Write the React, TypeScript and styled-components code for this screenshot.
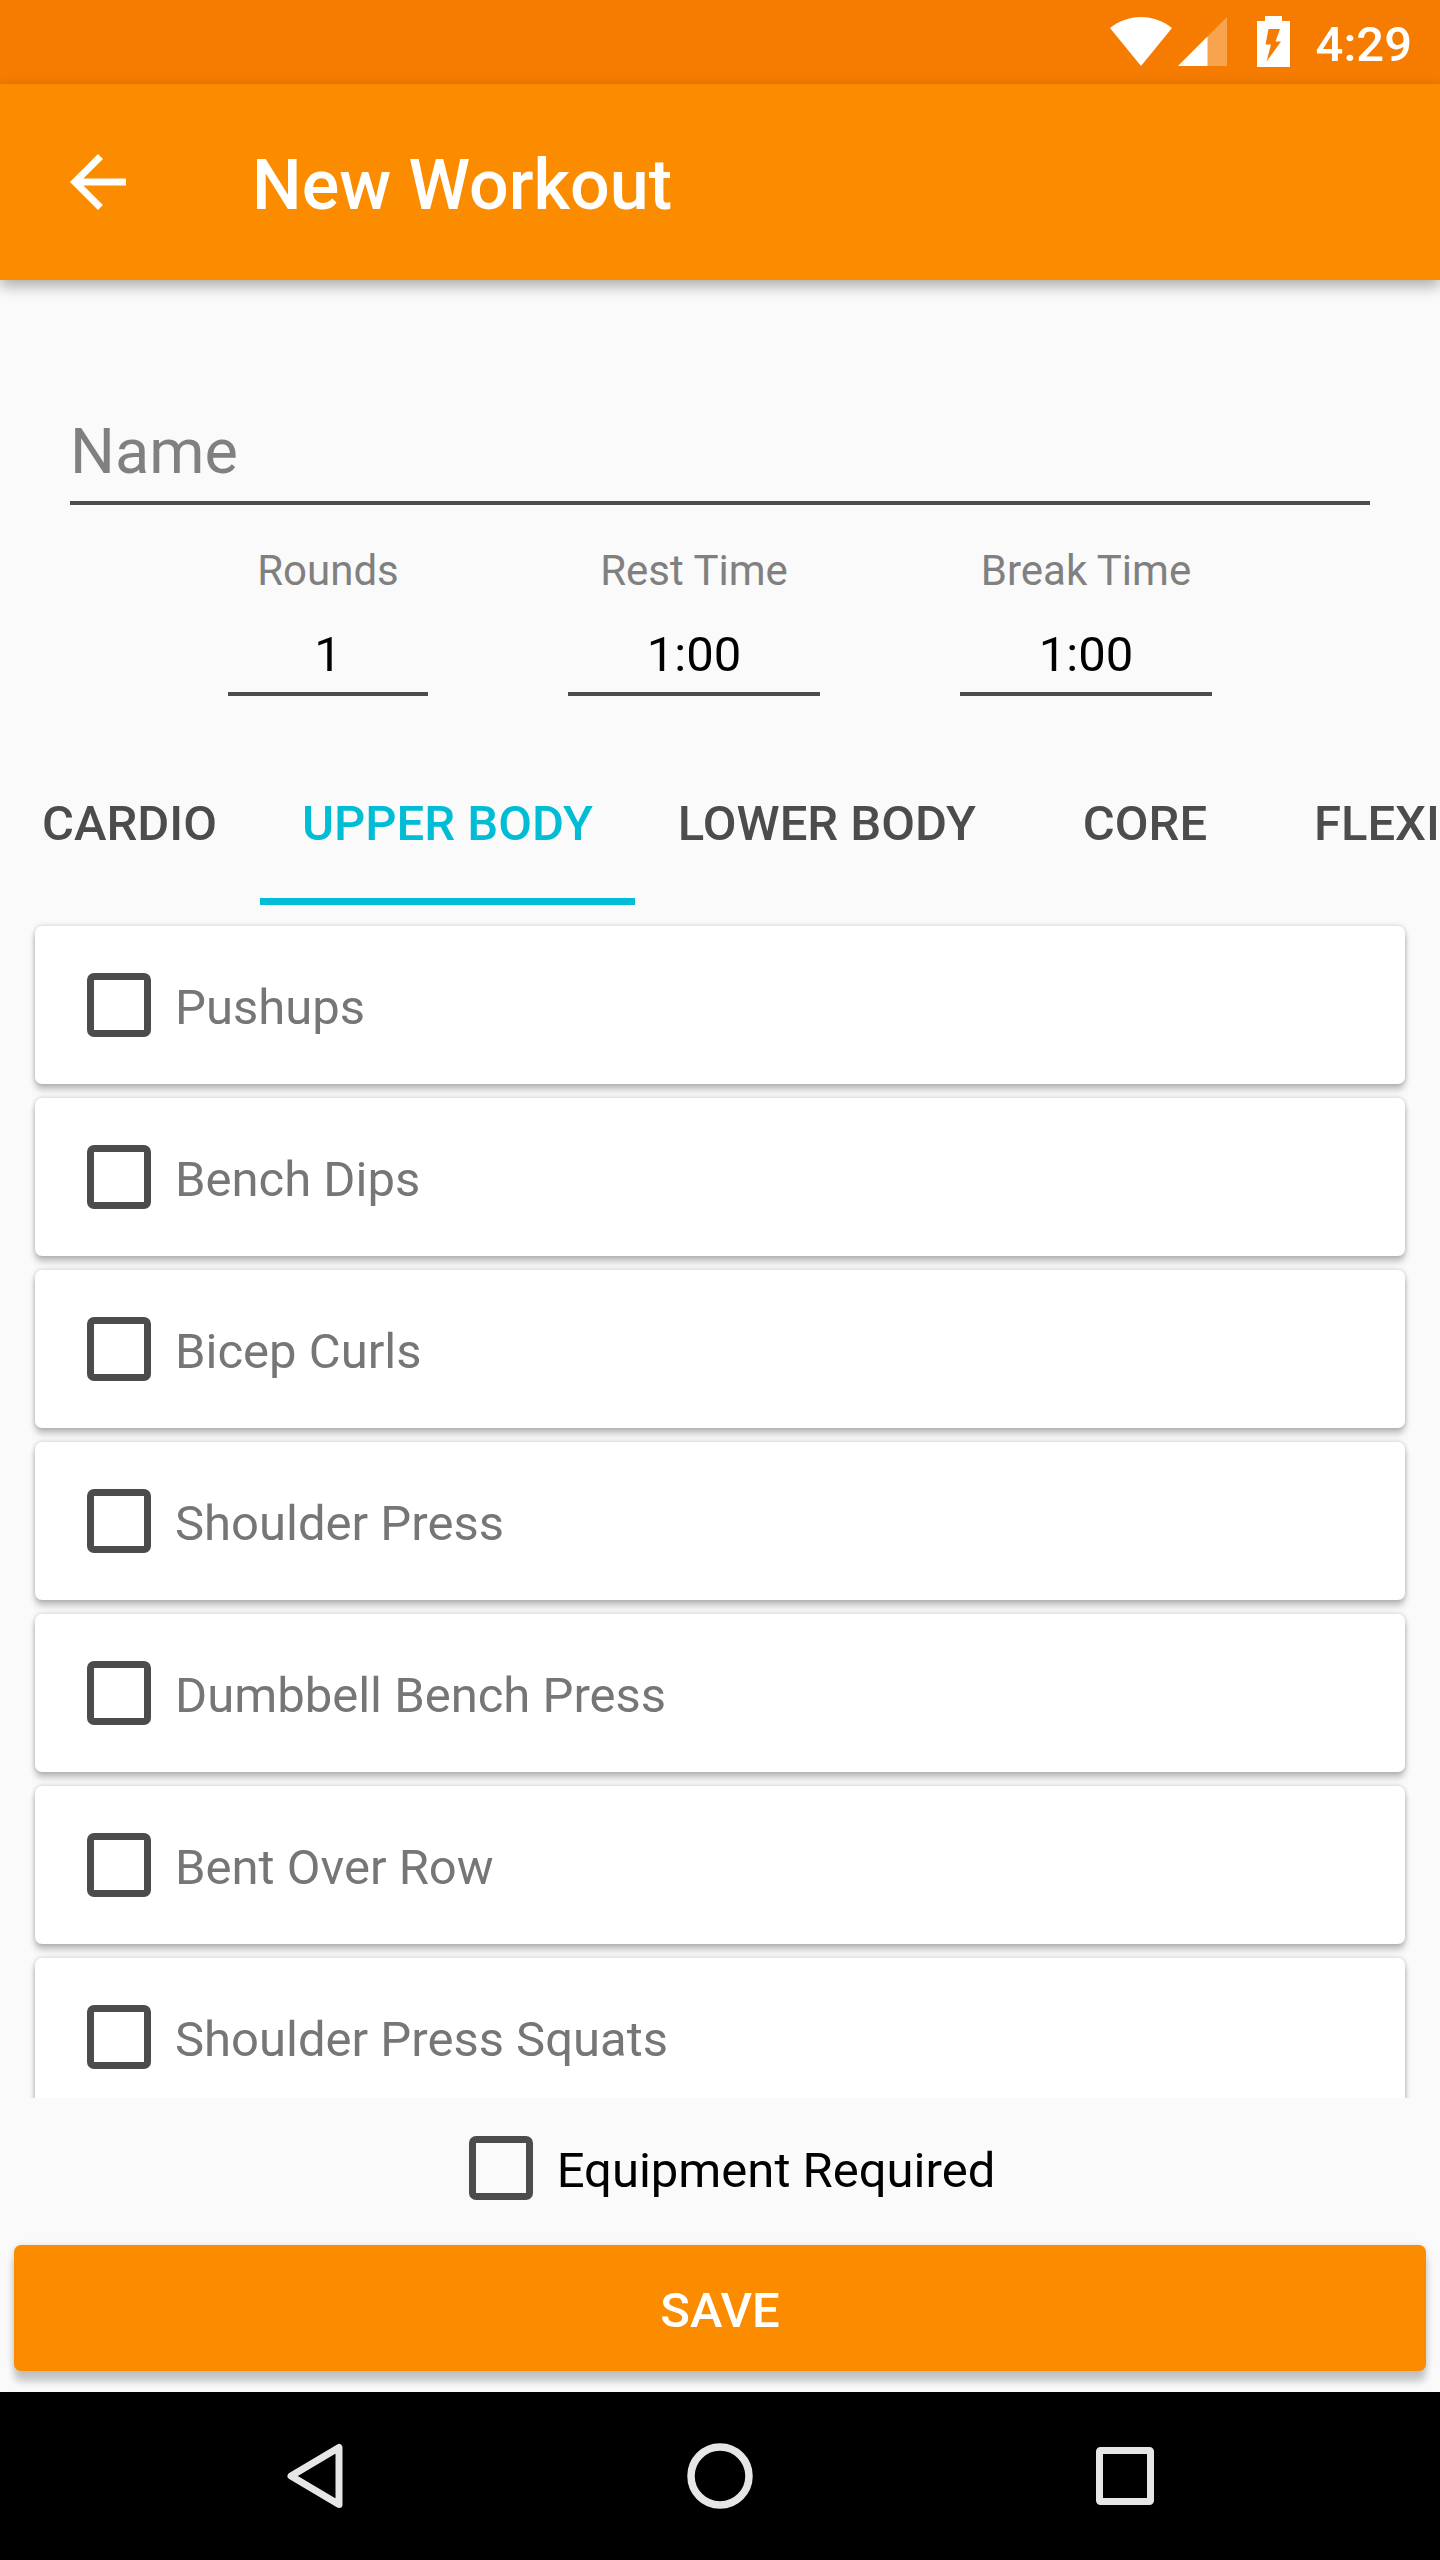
import React, { useState } from "react";
import styled, { createGlobalStyle } from "styled-components";

const color = {
  primary: "#fb8c00",
  primaryDark: "#f57c00",
  accent: "#00bcd4",
  background: "#fafafa",
  control: "#4c4c4c",
  hint: "#808080",
  secondary: "#767676",
};

const GlobalStyle = createGlobalStyle`
  *, *::before, *::after { box-sizing: border-box; }
  body { margin: 0; background: ${color.background}; }
  body, button, input { font-family: Roboto, "Noto Sans", sans-serif; }
`;

const Screen = styled.div`
  display: flex;
  flex-direction: column;
  height: 100vh;
  overflow: hidden;
  background: ${color.background};
`;

const StatusBar = styled.div`
  display: flex;
  justify-content: flex-end;
  align-items: center;
  gap: 26px;
  flex: none;
  height: 84px;
  padding: 4px 28px 0;
  background: ${color.primaryDark};
  color: #fff;
  font-size: 49px;
  font-weight: 500;
  line-height: 57px;
`;

const StatusIcons = styled.svg`
  display: block;
  width: 180px;
  height: 80px;
`;

const Toolbar = styled.header`
  display: flex;
  align-items: center;
  gap: 112px;
  flex: none;
  height: 196px;
  padding: 0 56px;
  background: ${color.primary};
  color: #fff;
  box-shadow: 0 6px 14px rgba(0, 0, 0, 0.32);
`;

const IconButton = styled.button`
  display: grid;
  place-items: center;
  padding: 0;
  border: 0;
  background: none;
  color: inherit;
`;

const Title = styled.h1`
  margin: 0;
  padding-top: 6px;
  font-size: 70px;
  font-weight: 500;
  line-height: 82px;
`;

const Form = styled.form`
  display: flex;
  flex-direction: column;
  flex: 1;
  min-height: 0;
`;

const TextInput = styled.input`
  width: 100%;
  padding: 0;
  border: 0;
  border-bottom: 4px solid ${color.control};
  border-radius: 0;
  outline: 0;
  background: transparent;
  color: #000;
`;

const NameRow = styled.div`
  flex: none;
  padding: 135px 70px 0;
`;

const NameInput = styled(TextInput)`
  height: 90px;
  padding-bottom: 14px;
  font-size: 63px;

  &::placeholder {
    color: ${color.hint};
    opacity: 1;
  }
`;

const NumberFields = styled.div`
  display: flex;
  justify-content: center;
  gap: 140px;
  flex: none;
  padding: 41px 70px;
`;

const NumberField = styled.label<{ $wide?: boolean }>`
  display: flex;
  flex-direction: column;
  gap: 31px;
  width: ${(p) => (p.$wide ? 252 : 200)}px;
  color: ${color.hint};
  font-size: 42px;
  line-height: 49px;
  text-align: center;
  white-space: nowrap;
`;

const NumberInput = styled(TextInput)`
  height: 70px;
  padding-bottom: 9px;
  font-size: 49px;
  text-align: center;
`;

const TabList = styled.div`
  display: flex;
  gap: 1px;
  flex: none;
  overflow: hidden;
`;

const Tab = styled.button<{ $active: boolean }>`
  flex: none;
  min-width: 252px;
  height: 168px;
  padding: 11px 42px 0;
  border: 0;
  border-bottom: 7px solid ${(p) => (p.$active ? color.accent : "transparent")};
  background: none;
  color: ${(p) => (p.$active ? color.accent : color.control)};
  font-size: 49px;
  font-weight: 500;
  line-height: 57px;
  text-transform: uppercase;
  white-space: nowrap;
`;

const ExerciseList = styled.ul`
  display: flex;
  flex-direction: column;
  gap: 14px;
  flex: 1;
  min-height: 0;
  margin: 0 28px;
  padding: 21px 7px 0;
  overflow: hidden;
  list-style: none;
`;

const ExerciseCard = styled.li`
  display: flex;
  flex: none;
  height: 158px;
  padding: 0 28px;
  border-radius: 7px;
  background: #fff;
  color: ${color.secondary};
  box-shadow: 0 6px 6px rgba(0, 0, 0, 0.22), 0 0 5px rgba(0, 0, 0, 0.2);
`;

const CheckLabel = styled.label`
  display: flex;
  align-items: center;
  gap: 24px;
  padding-left: 24px;
  font-size: 49px;
  line-height: 57px;
`;

const CheckText = styled.span`
  padding-top: 5px;
`;

const Checkbox = styled.input`
  appearance: none;
  flex: none;
  width: 64px;
  height: 64px;
  margin: 0;
  border: 7px solid ${color.control};
  border-radius: 7px;

  &:checked {
    border-color: ${color.accent};
    background: ${color.accent};
  }
`;

const EquipmentRow = styled.div`
  display: flex;
  justify-content: center;
  flex: none;
  height: 140px;
  color: #000;
`;

const Actions = styled.div`
  display: flex;
  flex: none;
  padding: 7px 14px 21px;
`;

const SaveButton = styled.button`
  flex: 1;
  height: 126px;
  padding: 5px 0 0;
  border: 0;
  border-radius: 7px;
  background: ${color.primary};
  color: #fff;
  font-size: 49px;
  font-weight: 500;
  line-height: 57px;
  text-transform: uppercase;
  box-shadow: 0 11px 7px rgba(0, 0, 0, 0.19), 0 1px 8px rgba(0, 0, 0, 0.12);
`;

const NavigationBar = styled.nav`
  position: relative;
  display: flex;
  justify-content: center;
  gap: 321px;
  flex: none;
  height: 168px;
  background: #000;
  color: #e6e6e6;
`;

const tabs = ["Cardio", "Upper Body", "Lower Body", "Core", "Flexibility"];

const exercises = [
  "Pushups",
  "Bench Dips",
  "Bicep Curls",
  "Shoulder Press",
  "Dumbbell Bench Press",
  "Bent Over Row",
  "Shoulder Press Squats",
];

function CheckItem({ children }: { children: string }) {
  return (
    <CheckLabel>
      <Checkbox type="checkbox" />
      <CheckText>{children}</CheckText>
    </CheckLabel>
  );
}

export default function App() {
  const [activeTab, setActiveTab] = useState("Upper Body");

  return (
    <>
      <GlobalStyle />
      <Screen>
        <StatusBar>
          <StatusIcons viewBox="0 -2 180 80" fill="currentColor" aria-hidden="true">
            <path d="M0 22C9 15 19 11 31 11S53 15 62 22L31 60Z" />
            <path d="M68 60L117 11V60Z" opacity="0.3" />
            <path d="M68 60L97.500 30.500V60Z" />
            <path
              fillRule="evenodd"
              d="M155 10H172V15H180V61H147V15H155ZM158.500 23L155.500 38.500H161L156.500 55.500L171 35.500H165.500L170 23Z"
            />
          </StatusIcons>
          <time>4:29</time>
        </StatusBar>

        <Toolbar>
          <IconButton type="button" aria-label="Back">
            <svg width="84" height="84" viewBox="0 0 24 24" fill="currentColor" aria-hidden="true">
              <path d="M20 11H7.830l5.590-5.590L12 4l-8 8 8 8 1.410-1.410L7.830 13H20v-2z" />
            </svg>
          </IconButton>
          <Title>New Workout</Title>
        </Toolbar>

        <Form onSubmit={(e) => e.preventDefault()}>
          <NameRow>
            <NameInput type="text" placeholder="Name" aria-label="Name" />
          </NameRow>

          <NumberFields>
            <NumberField>
              Rounds
              <NumberInput type="text" defaultValue="1" />
            </NumberField>
            <NumberField $wide>
              Rest Time
              <NumberInput type="text" defaultValue="1:00" />
            </NumberField>
            <NumberField $wide>
              Break Time
              <NumberInput type="text" defaultValue="1:00" />
            </NumberField>
          </NumberFields>

          <TabList role="tablist">
            {tabs.map((tab) => (
              <Tab
                key={tab}
                type="button"
                role="tab"
                aria-selected={tab === activeTab}
                $active={tab === activeTab}
                onClick={() => setActiveTab(tab)}
              >
                {tab}
              </Tab>
            ))}
          </TabList>

          <ExerciseList>
            {exercises.map((name) => (
              <ExerciseCard key={name}>
                <CheckItem>{name}</CheckItem>
              </ExerciseCard>
            ))}
          </ExerciseList>

          <EquipmentRow>
            <CheckItem>Equipment Required</CheckItem>
          </EquipmentRow>

          <Actions>
            <SaveButton type="submit">Save</SaveButton>
          </Actions>
        </Form>

        <NavigationBar>
          <IconButton type="button" aria-label="Back">
            <svg width="84" height="84" viewBox="0 0 84 84" fill="none" stroke="currentColor" strokeWidth="7" strokeLinejoin="round" aria-hidden="true">
              <path d="M66 13.500V70.500L18 42Z" />
            </svg>
          </IconButton>
          <IconButton type="button" aria-label="Home">
            <svg width="84" height="84" viewBox="0 0 84 84" fill="none" stroke="currentColor" strokeWidth="7.500" aria-hidden="true">
              <circle cx="42" cy="42" r="29" />
            </svg>
          </IconButton>
          <IconButton type="button" aria-label="Recent apps">
            <svg width="84" height="84" viewBox="0 0 84 84" fill="none" stroke="currentColor" strokeWidth="7" strokeLinejoin="round" aria-hidden="true">
              <rect x="16.500" y="16.500" width="51" height="51" rx="1" />
            </svg>
          </IconButton>
        </NavigationBar>
      </Screen>
    </>
  );
}
